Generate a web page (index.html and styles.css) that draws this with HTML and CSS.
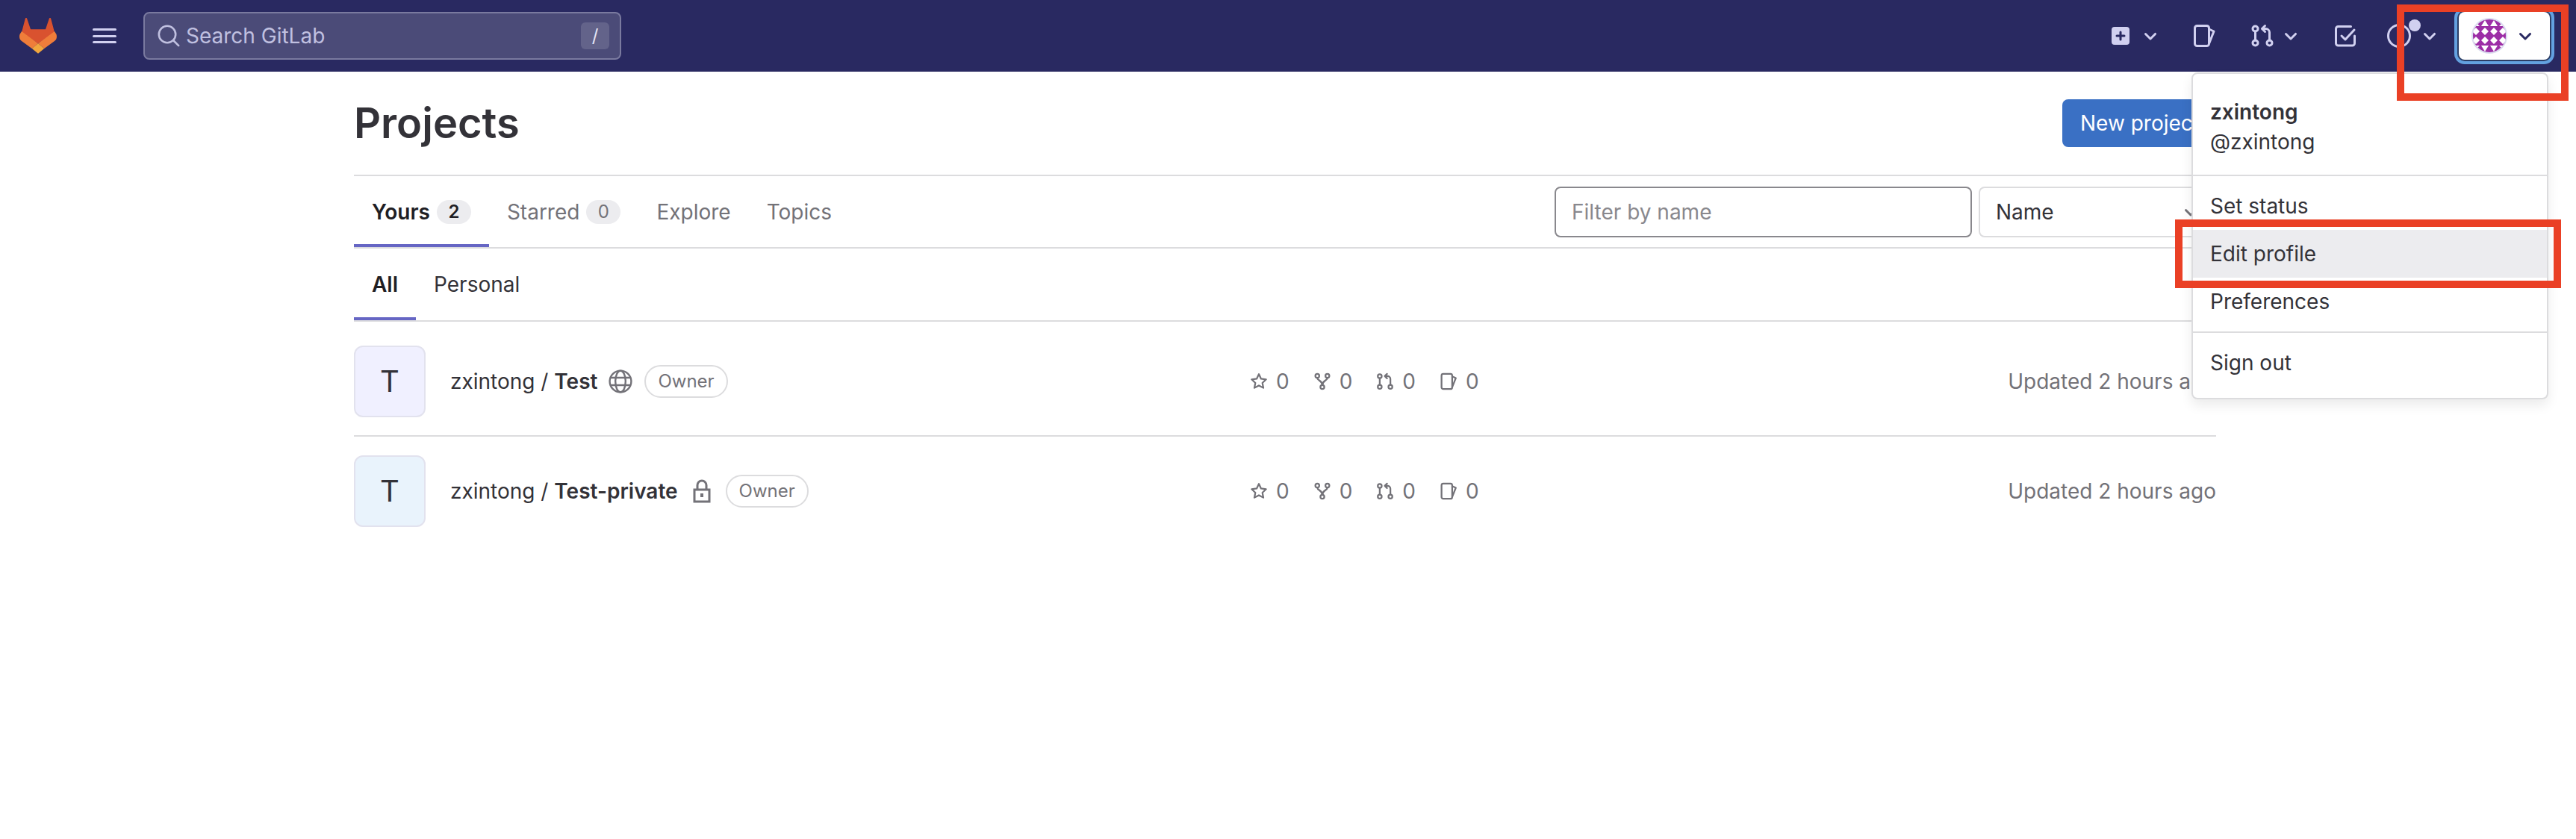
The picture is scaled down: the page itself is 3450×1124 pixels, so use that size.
FILE: index.html
```html
<!DOCTYPE html>
<html lang="en">
<head>
  <meta charset="UTF-8" />
  <title>Projects · GitLab</title>
  <link rel="stylesheet" href="styles.css">
</head>
<body>
  <svg class="icon-defs" width="0" height="0">
    <defs>
      <symbol id="i-chevron" viewBox="0 0 16 16"><path fill="currentColor" fill-rule="evenodd" d="M4.22 6.22a.75.75 0 0 1 1.06 0L8 8.94l2.72-2.72a.75.75 0 1 1 1.06 1.06l-3.25 3.25a.75.75 0 0 1-1.06 0L4.22 7.28a.75.75 0 0 1 0-1.06z"/></symbol>
      <symbol id="i-issue" viewBox="0 0 16 16"><g fill="none" stroke="currentColor" stroke-width="1.5" stroke-linejoin="round"><rect x="1.75" y="1.25" width="9.5" height="13.5" rx="1.5"/><path d="M11.25 3.5l3.25 1.5-3.25 8.25"/></g></symbol>
      <symbol id="i-mr" viewBox="0 0 16 16"><g fill="none" stroke="currentColor" stroke-width="1.5" stroke-linecap="round" stroke-linejoin="round"><circle cx="3.25" cy="3.25" r="1.75"/><circle cx="3.25" cy="12.75" r="1.75"/><circle cx="12.75" cy="12.75" r="1.75"/><path d="M3.25 5v6M12.75 11V5.75a2.500 2.500 0 0 0-2.500-2.500H8"/><path d="M9.750 1.250l-2 2 2 2"/></g></symbol>
      <symbol id="i-star" viewBox="0 0 16 16"><path fill="none" stroke="currentColor" stroke-width="1.5" stroke-linejoin="round" d="M8 1.5l1.95 4.1 4.5.6-3.3 3.1.85 4.45L8 11.6l-4 2.15.85-4.45-3.3-3.1 4.5-.6z"/></symbol>
      <symbol id="i-fork" viewBox="0 0 16 16"><g fill="none" stroke="currentColor" stroke-width="1.5" stroke-linecap="round"><circle cx="3.5" cy="3" r="1.75"/><circle cx="12.5" cy="3" r="1.75"/><circle cx="8" cy="13" r="1.75"/><path d="M3.5 4.75c0 2.5 4.5 2.5 4.5 6.5M12.5 4.75c0 2.5-4.5 2.5-4.5 6.5"/></g></symbol>
    </defs>
  </svg>

  <header class="navbar">
    <svg class="logo" viewBox="0 0 50 48">
      <path fill="#d9522f" d="M9 0c.7 0 1 .5 1.200 1L15 15.300h20L39.800 1c.2-.5.5-1 1.200-1s1 .5 1.200 1L47 19.300 25 34.300 3 19.300 7.800 1C8 .5 8.300 0 9 0z"/>
      <path fill="#ef7d3a" d="M3 18l22 16.300L16.700 41 3 31c-3-2-3.500-6-2.500-9zM47 18L25 34.300 33.300 41 47 31c3-2 3.500-6 2.500-9z"/>
      <path fill="#f2a63d" d="M25 34.300l8.300 6.700L25 47.700 16.700 41z"/>
    </svg>
    <button class="nav-menu" type="button" aria-label="Menu">
      <span></span><span></span><span></span>
    </button>
    <div class="nav-search">
      <svg class="nav-search-icon" viewBox="0 0 16 16"><g fill="none" stroke="currentColor" stroke-width="1.3" stroke-linecap="round"><circle cx="7" cy="7" r="5.600"/><path d="M11 11l3.600 3.600"/></g></svg>
      <span class="nav-search-text">Search GitLab</span>
      <kbd class="nav-search-key">/</kbd>
    </div>

    <nav class="nav-actions">
      <span class="nav-action nav-action-new">
        <svg class="nav-icon-plus" viewBox="0 0 24 24"><rect width="24" height="24" rx="4" fill="currentColor"/><path d="M12 7v10M7 12h10" stroke="#292961" stroke-width="3" stroke-linecap="round"/></svg>
        <svg class="nav-chevron"><use href="#i-chevron"/></svg>
      </span>
      <span class="nav-action nav-action-issue"><svg class="nav-icon"><use href="#i-issue"/></svg></span>
      <span class="nav-action nav-action-mr">
        <svg class="nav-icon"><use href="#i-mr"/></svg>
        <svg class="nav-chevron"><use href="#i-chevron"/></svg>
      </span>
      <span class="nav-action nav-action-todo">
        <svg class="nav-icon" viewBox="0 0 16 16"><g fill="none" stroke="currentColor" stroke-width="1.5" stroke-linecap="round" stroke-linejoin="round"><path d="M14.250 8v5c0 .83-.67 1.500-1.500 1.500h-9.500c-.83 0-1.500-.67-1.500-1.500V3.250c0-.83.67-1.500 1.500-1.500h8.500"/><path d="M5.500 8l2.500 2.500 6-6.500"/></g></svg>
      </span>
      <span class="nav-action nav-action-help">
        <svg class="nav-icon" viewBox="0 0 16 16"><circle cx="8" cy="8" r="7.250" fill="none" stroke="currentColor" stroke-width="1.500"/><circle cx="8" cy="5" r="1.100" fill="currentColor"/></svg>
        <span class="nav-dot"></span>
        <svg class="nav-chevron"><use href="#i-chevron"/></svg>
      </span>
      <button class="nav-user" type="button" aria-label="User menu">
        <svg class="nav-avatar" viewBox="0 0 48 48">
          <defs>
            <clipPath id="avatar-clip"><circle cx="24" cy="24" r="23"/></clipPath>
          </defs>
          <g clip-path="url(#avatar-clip)">
            <rect width="48" height="48" fill="#9c2ea6"/>
            <g fill="#fff">
              <path d="M18 13l5 5-5 5-5-5zM30 13l5 5-5 5-5-5zM18 25l5 5-5 5-5-5zM30 25l5 5-5 5-5-5zM6 13l5 5-5 5-5-5zM42 13l5 5-5 5-5-5zM6 25l5 5-5 5-5-5zM42 25l5 5-5 5-5-5z"/>
              <path d="M13 11l5-8 5 8zM25 11l5-8 5 8zM13 37l5 8 5-8zM25 37l5 8 5-8zM1 11l5-5 5 5zM37 11l5-5 5 5zM1 37l5 5 5-5zM37 37l5 5 5-5z"/>
            </g>
          </g>
          <circle cx="24" cy="24" r="23" fill="none" stroke="#dcdcf0" stroke-width="2"/>
        </svg>
        <svg class="nav-chevron nav-chevron-dark"><use href="#i-chevron"/></svg>
      </button>
    </nav>
  </header>

  <main class="content">
    <div class="page-head">
      <h1>Projects</h1>
      <a class="btn-new" href="#">New project</a>
    </div>

    <div class="tabs">
      <a class="tab active" href="#">Yours <span class="tab-count">2</span></a>
      <a class="tab" href="#">Starred <span class="tab-count">0</span></a>
      <a class="tab" href="#">Explore</a>
      <a class="tab" href="#">Topics</a>
      <div class="tab-filters">
        <input class="filter-input" type="text" placeholder="Filter by name" />
        <div class="sort-select">
          <span>Name</span>
          <svg class="sort-chevron"><use href="#i-chevron"/></svg>
        </div>
      </div>
    </div>

    <div class="tabs subtabs">
      <a class="tab active" href="#">All</a>
      <a class="tab tab-dark" href="#">Personal</a>
    </div>

    <ul class="project-list">
      <li class="project first">
        <div class="project-main">
          <div class="project-avatar avatar-violet">T</div>
          <span class="project-name">zxintong / <b>Test</b></span>
          <svg class="vis-icon vis-globe" viewBox="0 0 16 16"><g fill="none" stroke="currentColor" stroke-width="1.200"><circle cx="8" cy="8" r="7.200"/><ellipse cx="8" cy="8" rx="3.400" ry="7.200"/><path d="M1 5.500h14M1 10.500h14"/></g></svg>
          <span class="role-badge">Owner</span>
        </div>
        <div class="project-stats">
          <span class="stat"><svg><use href="#i-star"/></svg>0</span>
          <span class="stat"><svg><use href="#i-fork"/></svg>0</span>
          <span class="stat"><svg><use href="#i-mr"/></svg>0</span>
          <span class="stat"><svg><use href="#i-issue"/></svg>0</span>
        </div>
        <div class="project-updated">Updated 2 hours ago</div>
      </li>
      <li class="project">
        <div class="project-main">
          <div class="project-avatar avatar-blue">T</div>
          <span class="project-name">zxintong / <b>Test-private</b></span>
          <svg class="vis-icon vis-lock" viewBox="0 0 12 16"><path fill="none" stroke="currentColor" stroke-width="1.500" d="M3 7V4a3 3 0 0 1 6 0v3M1 7h10v8H1z"/><rect x="5" y="9.500" width="2" height="2.500" fill="currentColor"/></svg>
          <span class="role-badge">Owner</span>
        </div>
        <div class="project-stats">
          <span class="stat"><svg><use href="#i-star"/></svg>0</span>
          <span class="stat"><svg><use href="#i-fork"/></svg>0</span>
          <span class="stat"><svg><use href="#i-mr"/></svg>0</span>
          <span class="stat"><svg><use href="#i-issue"/></svg>0</span>
        </div>
        <div class="project-updated">Updated 2 hours ago</div>
      </li>
    </ul>
  </main>

  <div class="user-menu">
    <div class="user-menu-head">
      <div class="user-menu-name">zxintong</div>
      <div class="user-menu-handle">@zxintong</div>
    </div>
    <div class="user-menu-group">
      <a class="user-menu-item" href="#">Set status</a>
      <a class="user-menu-item hover" href="#">Edit profile</a>
      <a class="user-menu-item" href="#">Preferences</a>
    </div>
    <div class="user-menu-group">
      <a class="user-menu-item" href="#">Sign out</a>
    </div>
  </div>

  <div class="callout callout-avatar"></div>
  <div class="callout callout-edit"></div>
</body>
</html>
```

FILE: styles.css
```css
* {
  box-sizing: border-box;
}

html, body {
  height: 100%;
  margin: 0;
  font-family: Inter, 'Noto Sans', sans-serif;
  font-size: 28px;
  line-height: 40px;
  color: #333238;
  background: #fff;
  overflow: hidden;
}

a {
  color: inherit;
  text-decoration: none;
}

.icon-defs {
  position: absolute;
}

/* top bar */
.navbar {
  display: flex;
  align-items: center;
  height: 96px;
  padding-left: 26px;
  background: #292961;
  color: #d1d0f0;
}

.logo {
  width: 50px;
  height: 48px;
  flex: none;
}

.nav-menu {
  display: flex;
  flex-direction: column;
  justify-content: space-between;
  width: 32px;
  height: 20px;
  margin-left: 48px;
  padding: 0;
  border: none;
  background: none;
}

.nav-menu span {
  display: block;
  height: 3px;
  border-radius: 2px;
  background: #d1d0f0;
}

.nav-search {
  display: flex;
  align-items: center;
  width: 640px;
  height: 64px;
  margin-left: 36px;
  padding: 0 14px 0 16px;
  border: 2px solid #7a7a9f;
  border-radius: 8px;
  background: #4b4b78;
  color: #c0c0e0;
}

.nav-search-icon {
  width: 32px;
  height: 32px;
  flex: none;
}

.nav-search-text {
  margin-left: 7px;
}

.nav-search-key {
  margin-left: auto;
  width: 38px;
  height: 36px;
  border-radius: 6px;
  background: #63638a;
  color: #e4e4f4;
  font-family: Inter, sans-serif;
  font-size: 24px;
  line-height: 36px;
  text-align: center;
}

.nav-actions {
  display: flex;
  align-items: center;
  margin-left: auto;
  padding-right: 35px;
}

.nav-action {
  position: relative;
  display: flex;
  align-items: center;
}

.nav-icon {
  width: 32px;
  height: 32px;
  flex: none;
}

.nav-icon-plus {
  width: 24px;
  height: 24px;
  flex: none;
}

.nav-chevron {
  width: 32px;
  height: 32px;
  flex: none;
}

.nav-action-new {
  gap: 12px;
}

.nav-action-issue {
  margin-left: 40px;
}

.nav-action-mr {
  margin-left: 46px;
  gap: 6px;
}

.nav-action-todo {
  margin-left: 41px;
}

.nav-action-help {
  margin-left: 40px;
  gap: 9px;
}

.nav-dot {
  position: absolute;
  left: 29px;
  top: -6px;
  width: 16px;
  height: 16px;
  border-radius: 50%;
  background: #d1d0f0;
}

.nav-user {
  display: flex;
  align-items: center;
  gap: 8px;
  width: 122px;
  height: 64px;
  margin-left: 23px;
  padding: 0 0 0 17px;
  border: none;
  border-radius: 8px;
  background: #fff;
  box-shadow: 0 0 0 2px #2c3e66, 0 0 0 6px #63a1e0;
}

.nav-avatar {
  width: 48px;
  height: 48px;
  flex: none;
}

.nav-chevron-dark {
  color: #292961;
}

/* page */
.content {
  width: 2494px;
  margin-left: 474px;
}

.page-head {
  display: flex;
  align-items: center;
  justify-content: space-between;
  height: 140px;
  border-bottom: 2px solid #dcdcde;
}

h1 {
  margin: 0;
  font-size: 56px;
  font-weight: 600;
  line-height: 64px;
}

.btn-new {
  width: 206px;
  height: 64px;
  padding: 0 24px;
  border-radius: 8px;
  background: #3a70c4;
  color: #fff;
  line-height: 64px;
  white-space: nowrap;
}

.tabs {
  display: flex;
  align-items: stretch;
  height: 97px;
  border-bottom: 2px solid #dcdcde;
}

.subtabs {
  height: 98px;
}

.tab {
  display: flex;
  align-items: center;
  gap: 9px;
  padding: 0 24px;
  color: #737278;
}

.tab-dark {
  color: #333238;
}

.tab.active {
  color: #1f1e24;
  font-weight: 600;
  box-shadow: inset 0 -4px 0 #6666c4;
}

.tab-count {
  min-width: 46px;
  height: 32px;
  padding: 0 14px;
  border-radius: 16px;
  background: #ececef;
  font-size: 24px;
  font-weight: 400;
  line-height: 32px;
  text-align: center;
}

.tab.active .tab-count {
  font-weight: 600;
}

.tab-filters {
  display: flex;
  align-items: center;
  gap: 9px;
  margin-left: auto;
}

.filter-input {
  width: 559px;
  height: 68px;
  padding: 0 21px;
  border: 2px solid #89888d;
  border-radius: 8px;
  font: inherit;
  color: #333238;
}

.filter-input::placeholder {
  color: #89888d;
  opacity: 1;
}

.sort-select {
  display: flex;
  align-items: center;
  justify-content: space-between;
  width: 318px;
  height: 68px;
  padding: 0 16px 0 21px;
  border: 2px solid #dcdcde;
  border-radius: 8px;
}

.sort-chevron {
  width: 32px;
  height: 32px;
  color: #737278;
}

/* project rows */
.project-list {
  margin: 0;
  padding: 0;
  list-style: none;
}

.project {
  display: flex;
  align-items: center;
  height: 145px;
  padding: 24px 0;
}

.project.first {
  height: 154px;
  padding: 32px 0 24px;
  border-bottom: 2px solid #dcdcde;
}

.project-main {
  display: flex;
  align-items: center;
  width: 1200px;
  flex: none;
}

.project-avatar {
  width: 96px;
  height: 96px;
  margin-right: 33px;
  border: 2px solid #e2e2ee;
  border-radius: 12px;
  font-size: 40px;
  line-height: 92px;
  text-align: center;
}

.avatar-violet {
  background: #f0f0ff;
}

.avatar-blue {
  background: #e9f3fc;
}

.project-name b {
  font-weight: 600;
}

.vis-icon {
  flex: none;
  color: #737278;
}

.vis-globe {
  width: 32px;
  height: 32px;
  margin: 0 16px 0 15px;
}

.vis-lock {
  width: 24px;
  height: 32px;
  margin: 0 20px 0 20px;
}

.role-badge {
  height: 44px;
  padding: 0 16px;
  border: 2px solid #dcdcde;
  border-radius: 22px;
  color: #737278;
  font-size: 24px;
  line-height: 40px;
}

.project-stats {
  display: flex;
  gap: 32px;
  color: #737278;
}

.stat {
  display: flex;
  align-items: center;
  gap: 11px;
}

.stat svg {
  width: 24px;
  height: 24px;
  flex: none;
}

.project-updated {
  margin-left: auto;
  color: #737278;
  white-space: nowrap;
}

/* overlays */
.user-menu {
  position: absolute;
  left: 2935px;
  top: 97px;
  width: 478px;
  height: 438px;
  border: 2px solid #dcdcde;
  border-radius: 8px;
  background: #fff;
  box-shadow: 0 8px 16px rgba(0, 0, 0, 0.08);
}

.user-menu-head {
  height: 137px;
  padding: 31px 23px 0;
  border-bottom: 2px solid #dcdcde;
}

.user-menu-name {
  font-weight: 600;
}

.user-menu-group {
  padding: 8px 0;
}

.user-menu-group + .user-menu-group {
  border-top: 2px solid #dcdcde;
  padding-top: 8px;
}

.user-menu-item {
  display: block;
  height: 64px;
  padding: 0 23px;
  line-height: 64px;
}

.user-menu-item.hover {
  background: #ececef;
}

.callout {
  position: absolute;
  border: 10px solid #ea4025;
}

.callout-avatar {
  left: 3210px;
  top: 6px;
  width: 230px;
  height: 129px;
}

.callout-edit {
  left: 2913px;
  top: 294px;
  width: 517px;
  height: 92px;
}
```
